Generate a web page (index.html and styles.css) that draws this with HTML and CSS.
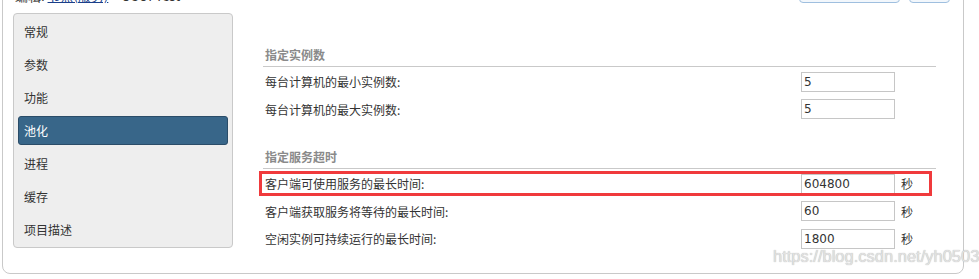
FILE: index.html
```html
<!DOCTYPE html>
<html lang="zh">
<head>
<meta charset="utf-8">
<link rel="stylesheet" href="styles.css">
</head>
<body>
<div class="panel">
  <div class="header">
    <div class="crumb">编辑: <a class="crumb-link">节点(服务)</a> &gt; OSUFTest</div>
    <div class="actions">
      <span class="btn btn-wide"></span>
      <span class="btn btn-small"></span>
    </div>
  </div>
  <div class="main">
    <ul class="nav">
      <li class="nav-item">常规</li>
      <li class="nav-item">参数</li>
      <li class="nav-item">功能</li>
      <li class="nav-item active">池化</li>
      <li class="nav-item">进程</li>
      <li class="nav-item">缓存</li>
      <li class="nav-item">项目描述</li>
    </ul>
    <div class="content">
      <section class="group">
        <h3 class="group-title">指定实例数</h3>
        <div class="row"><span class="label">每台计算机的最小实例数:</span><span class="field">5</span></div>
        <div class="row"><span class="label">每台计算机的最大实例数:</span><span class="field">5</span></div>
      </section>
      <section class="group group-2">
        <h3 class="group-title">指定服务超时</h3>
        <div class="row marked"><span class="label">客户端可使用服务的最长时间:</span><span class="field">604800</span><span class="unit">秒</span><span class="highlight"></span></div>
        <div class="row"><span class="label">客户端获取服务将等待的最长时间:</span><span class="field">60</span><span class="unit">秒</span></div>
        <div class="row"><span class="label">空闲实例可持续运行的最长时间:</span><span class="field">1800</span><span class="unit">秒</span></div>
      </section>
    </div>
  </div>
  <div class="watermark">https://blog.csdn.net/yh0503</div>
</div>
</body>
</html>
```

FILE: styles.css
```css
html, body {
  margin: 0;
  padding: 0;
  background: #ffffff;
  overflow: hidden;
}
body {
  font-family: "Noto Sans CJK SC", "Noto Sans", sans-serif;
  font-size: 12px;
  color: #333333;
}
.panel {
  position: relative;
  margin: -20px 15px 0 2px;
  border: 1px solid #c9c9c9;
  border-radius: 8px;
  padding: 0 0 19px 10px;
  height: 294px;
  box-sizing: border-box;
}
.header {
  display: flex;
  justify-content: space-between;
  align-items: flex-end;
  height: 22px;
  padding: 0 13px 0 2px;
}
.crumb {
  font-size: 13px;
  line-height: 16px;
  color: #333;
  margin-bottom: -1px;
}
.crumb-link {
  color: #1a3f8a;
  text-decoration: underline;
}
.actions {
  display: flex;
  gap: 9px;
  align-self: stretch;
}
.btn {
  display: block;
  height: 100%;
  box-sizing: border-box;
  border: 1px solid #9fbfdf;
  border-radius: 4px;
  background: #f2f7fc;
}
.btn-wide { width: 101px; }
.btn-small { width: 41px; }
.main {
  display: grid;
  grid-template-columns: 220px 1fr;
  column-gap: 30px;
  margin-top: 10px;
  margin-right: 27px;
  align-items: start;
}
.nav {
  list-style: none;
  margin: 0;
  padding: 3px 4px;
  background: #eeeeee;
  border: 1px solid #c9c9c9;
  border-radius: 4px;
}
.nav-item {
  height: 29px;
  line-height: 29px;
  padding-left: 6px;
  margin-bottom: 4px;
  box-sizing: border-box;
  color: #333;
}
.nav-item:last-child { margin-bottom: 0; }
.nav-item.active {
  background: #386689;
  border: 1px solid #2a4c68;
  border-radius: 3px;
  color: #ffffff;
  line-height: 27px;
  padding-left: 5px;
}
.content {
  margin-top: 34px;
}
.group-title {
  margin: 0;
  font-size: 12px;
  line-height: 16px;
  font-weight: bold;
  color: #8a8a8a;
  padding: 0 0 3px 2px;
  border-bottom: 1px solid #c9c9c9;
}
.group-title + .row { margin-top: 1px; }
.group-2 { margin-top: 26px; }
.row {
  position: relative;
  display: flex;
  align-items: center;
  height: 27.5px;
  padding-left: 2px;
}
.label {
  width: 536px;
  flex: none;
}
.field {
  width: 94px;
  height: 20px;
  box-sizing: border-box;
  border: 1px solid #c6c6c6;
  background: #fff;
  padding-left: 2px;
  font-family: "DejaVu Sans", Verdana, sans-serif;
  font-size: 12px;
  line-height: 18px;
  color: #333;
}
.unit {
  margin-left: 6px;
  color: #333;
}
.highlight {
  position: absolute;
  left: -4px;
  top: 1px;
  right: 4px;
  height: 25px;
  box-sizing: border-box;
  border: 3px solid #f03a3c;
}
.watermark {
  position: absolute;
  left: 770px;
  top: 266px;
  font-family: "Liberation Sans", Arial, sans-serif;
  font-size: 16.5px;
  color: #e2e2e2;
  text-shadow: 0 0 1px #a8a8a8;
  white-space: nowrap;
}
```
